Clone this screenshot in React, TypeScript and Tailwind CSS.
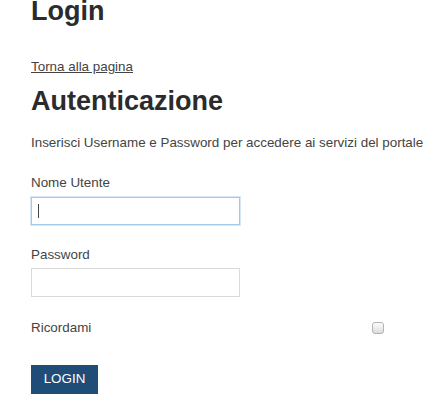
import React from "react";

export default function App() {
  return (
    <div
      className="w-[438px] h-[416px] overflow-hidden bg-white text-[#333] pl-[31px]"
      style={{ fontFamily: '"Liberation Sans", Arial, sans-serif' }}
    >
      <h1 className="text-[27px] leading-[23px] font-bold text-[#2b2b2b]">Login</h1>
      <a href="#" className="mt-[36px] block w-fit text-[13.4px] leading-[15px] text-[#444] underline underline-offset-[1px]">
        Torna alla pagina
      </a>
      <h2 className="mt-[14px] text-[27px] leading-[27px] font-bold text-[#2b2b2b]">Autenticazione</h2>
      <p className="mt-[20px] text-[13.4px] leading-[15px] text-[#444] whitespace-nowrap">
        Inserisci Username e Password per accedere ai servizi del portale
      </p>
      <div className="mt-[25px] text-[13.4px] leading-[15px] text-[#444]">Nome Utente</div>
      <div className="mt-[7px] flex h-[28px] w-[209px] items-center border border-[#a3c9ec] px-[6px] shadow-[0_0_0_1px_#d6e7f7]">
        <span className="h-[14px] w-px bg-[#444]" />
      </div>
      <div className="mt-[22px] text-[13.4px] leading-[15px] text-[#444]">Password</div>
      <input
        type="password"
        className="mt-[6px] block h-[29px] w-[209px] border border-[#d9d9d9] px-[6px] outline-none"
      />
      <div className="mt-[23px] flex w-[353px] items-center justify-between">
        <span className="text-[13.4px] leading-[15px] text-[#444]">Ricordami</span>
        <span className="h-[12px] w-[12px] rounded-[3px] border border-[#b3b3b3] bg-linear-to-b from-[#fdfdfd] to-[#dcdcdc]" />
      </div>
      <button className="mt-[30px] flex h-[29px] w-[67px] items-center justify-center bg-[#1f4d78] text-[13.4px] text-white">
        LOGIN
      </button>
    </div>
  );
}
